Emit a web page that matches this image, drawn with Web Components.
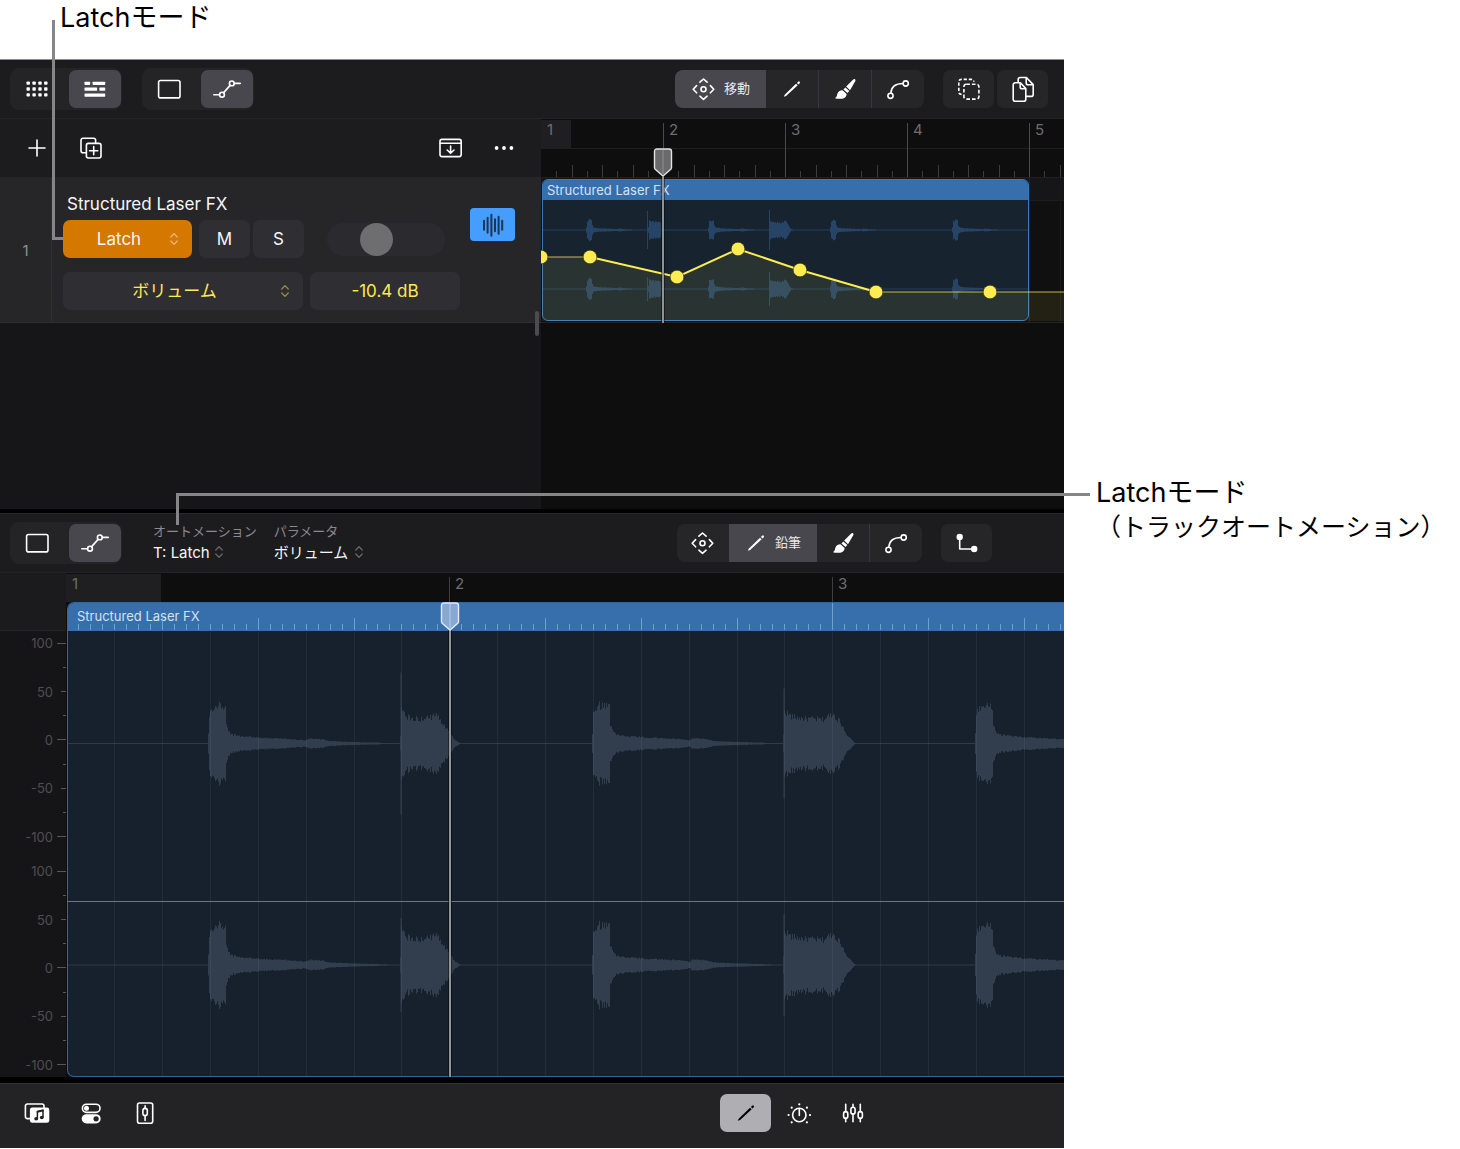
<!DOCTYPE html>
<html lang="ja">
<head>
<meta charset="utf-8">
<title>Latchモード</title>
<style>
  body {
    margin: 0;
    background: #fff;
    color: #000;
    font-family: Inter, "Noto Sans CJK JP", sans-serif;
  }
</style>
</head>
<body>
<latch-figure>
  <callout-note slot="top">Latchモード</callout-note>
  <daw-app slot="app"></daw-app>
  <callout-note slot="side">Latchモード<span slot="detail">（トラックオートメーション）</span></callout-note>
</latch-figure>

<script>
const define = (name, html, setup) => {
  const tpl = document.createElement('template');
  tpl.innerHTML = html;
  customElements.define(name, class extends HTMLElement {
    connectedCallback() {
      if (this.shadowRoot) return;
      const root = this.attachShadow({ mode: 'open' });
      root.append(tpl.content.cloneNode(true));
      if (setup) setup(this, root);
    }
  });
};

/* ---------- icons: [width, height, markup] ---------- */
const dots = [3.2, 9.1, 15, 20.8].flatMap(x => [6.1, 12, 17.9].map(y =>
  `<rect x="${x - 1.7}" y="${y - 1.7}" width="3.4" height="3.4" rx=".8" fill="currentColor" stroke="none"/>`)).join('');
const ICONS = {
  grid: [24, 24, dots],
  tracks: [24, 24, '<g fill="currentColor" stroke="none"><rect x="1.5" y="4.7" width="5.6" height="3.2" rx=".6"/><rect x="9.6" y="4.7" width="12.6" height="3.2" rx=".6"/><rect x="1.5" y="10.6" width="12.6" height="3.2" rx=".6"/><rect x="16.4" y="10.6" width="5.8" height="3.2" rx=".6"/><rect x="1.5" y="16.5" width="20.7" height="3.2" rx=".6"/></g>'],
  rect: [24, 24, '<rect x="1.6" y="3.5" width="21.4" height="17.4" rx="2"/>'],
  automation: [28, 24, '<path d="M.8 17.8H6.4M10.7 15.6L17.1 8.4M21.4 6.4H27.2"/><circle cx="9" cy="17.7" r="2.4"/><circle cx="18.8" cy="6.4" r="2.4"/>'],
  move: [25, 24, '<path d="M8.9 5.2L12.5 2L16.1 5.2M8.9 19.2L12.5 22.4L16.1 19.2M5.6 8.6L2.2 12.2L5.6 15.8M19.4 8.6L22.8 12.2L19.4 15.8"/><circle cx="12.5" cy="12.2" r="2.5"/>'],
  pencil: [22, 24, '<path fill="currentColor" stroke="none" d="M2.8 19.8L3.7 17.7L15 6.7L16.7 8.3L5.1 19ZM15.9 5.9L17.1 4.7Q18 4 18.7 4.7Q19.3 5.4 18.7 6.3L17.6 7.5Z"/>'],
  brush: [24, 24, '<g fill="currentColor" stroke="none"><path d="M13.2 9.6L20.2 2.5Q21.3 1.6 22.1 2.3Q22.8 3.1 22.2 4.2L17 13.2Z"/><path d="M12.4 10.5L16.3 14.1L14.5 16L10.4 12.4Z"/><path d="M9.5 13.2L13.6 16.9C13.7 20 11.2 21.6 8 21.7C5.5 22 3.5 21.9 1.8 21C3.7 20.6 3.9 18.6 4.3 17C4.8 14.9 6.9 13.2 9.5 13.2Z"/></g>'],
  curve: [24, 24, '<circle cx="4.5" cy="18.8" r="2.6"/><circle cx="19.7" cy="6.5" r="2.6"/><path d="M4.9 16C5.3 9.8 9.8 6.5 17 6.5"/>'],
  select: [24, 24, '<g stroke-linecap="butt"><path stroke-dasharray="3.2 1.9" d="M4.6 17.4Q1.8 17.2 1.8 14.8V5Q1.8 2.4 4.4 2.4H14Q16.6 2.4 16.8 4.8"/><rect x="6.9" y="7.2" width="15" height="14.9" rx="2.4" stroke-dasharray="3.6 2"/></g>'],
  docs: [24, 26, '<path d="M4.2 6.8H9.4L14.8 12.6V23.2a2 2 0 0 1-2 2H4.2a2 2 0 0 1-2-2V8.8a2 2 0 0 1 2-2zM9.2 7V11a1.8 1.8 0 0 0 1.8 1.8H14.6M7.2 6.4V3.5a2 2 0 0 1 2-2H15.4L22.2 8.6V18.4a2 2 0 0 1-2 2H15M15.2 1.8V7a1.8 1.8 0 0 0 1.8 1.8H22"/>'],
  plus: [24, 24, '<path d="M12 4V20M4 12H20"/>'],
  duplicate: [24, 24, '<path d="M6.8 16.8H4a2 2 0 0 1-2-2V4.2a2 2 0 0 1 2-2H14.6a2 2 0 0 1 2 2V6.8"/><rect x="7.4" y="7.4" width="14.6" height="14.6" rx="2"/><path d="M14.7 10.6V18.8M10.6 14.7H18.8"/>'],
  inbox: [24, 24, '<rect x="2" y="3.4" width="21.2" height="17.2" rx="2"/><path d="M2.2 7.3H23M12.6 10V17.2M9.2 14L12.6 17.3L16 14"/>'],
  more: [24, 24, '<g fill="currentColor" stroke="none"><circle cx="4.6" cy="12" r="1.9"/><circle cx="12" cy="12" r="1.9"/><circle cx="19.4" cy="12" r="1.9"/></g>'],
  wave: [24, 24, '<path stroke-width="2" d="M3 7.7V16.7M6.6 4.7V19.7M10.4 1.7V22.7M14 6.2V18.2M17.6 3.7V20.7M21.2 7.7V16.7"/>'],
  step: [24, 24, '<path d="M4.7 6V18H19"/><g fill="currentColor" stroke="none"><circle cx="4.7" cy="6" r="3.2"/><circle cx="19.2" cy="18" r="3.2"/></g>'],
  library: [28, 24, '<path d="M6.6 17.6H4.4a2 2 0 0 1-2-2V5a2 2 0 0 1 2-2H19a2 2 0 0 1 2 2V6.4"/><rect x="6.9" y="6.6" width="19.4" height="15.2" rx="2.4" fill="currentColor" stroke="none"/><g stroke="#232325"><path stroke-width="1.5" d="M14.4 17.4V10.6L20 9.2V16"/><path stroke-width="1.8" d="M14.4 10.8L20 9.4"/><ellipse cx="13.2" cy="17.8" rx="1.2" ry="1" fill="#232325"/><ellipse cx="18.8" cy="16.5" rx="1.2" ry="1" fill="#232325"/></g>'],
  toggles: [24, 24, '<rect x="3.4" y="3.2" width="17.6" height="8.2" rx="4.1"/><circle cx="7.5" cy="7.3" r="2.5" fill="currentColor" stroke="none"/><rect x="2.7" y="13.2" width="19" height="9.2" rx="4.6" fill="currentColor" stroke="none"/><circle cx="17.1" cy="17.8" r="2.6" fill="#232325" stroke="none"/>'],
  fader: [24, 24, '<rect x="4.5" y="2" width="15.2" height="20.2" rx="2"/><path d="M12.1 4.8V7.6M12.1 14.6V19.4"/><rect x="9.9" y="7.4" width="4.4" height="7.2" rx="2.2"/>'],
  dial: [24, 24, '<circle cx="12.3" cy="14" r="6.7"/><path d="M12.3 7.6V14.4"/><g fill="currentColor" stroke="none"><circle cx="12.3" cy="3.3" r="1.1"/><circle cx="4.7" cy="6.7" r="1.1"/><circle cx="19.9" cy="6.7" r="1.1"/><circle cx="1.6" cy="14" r="1.1"/><circle cx="23" cy="14" r="1.1"/><circle cx="4.7" cy="21.3" r="1.1"/><circle cx="19.9" cy="21.3" r="1.1"/></g>'],
  mixer: [24, 24, '<path d="M4.7 3.3V10.8M4.7 17.4V20.8M12 3.3V6.4M12 13V20.8M19.3 3.3V10.8M19.3 17.4V20.8"/><g stroke-width="1.6"><rect x="2.6" y="10.6" width="4.2" height="6.8" rx="2.1"/><rect x="9.9" y="6.2" width="4.2" height="6.8" rx="2.1"/><rect x="17.2" y="10.6" width="4.2" height="6.8" rx="2.1"/></g>'],
  updown: [8, 14, '<path stroke-width="1.3" d="M.8 5L4 1.6L7.2 5M.8 9L4 12.4L7.2 9"/>'],
};

define('ui-icon', `
<style>
  :host { display: block; flex: none; }
  svg { display: block; fill: none; stroke: currentColor; stroke-width: 1.6; stroke-linecap: round; stroke-linejoin: round; }
</style>`, (el, root) => {
  const [w, h, body] = ICONS[el.getAttribute('name')];
  root.innerHTML += `<svg width="${w}" height="${h}" viewBox="0 0 ${w} ${h}" aria-hidden="true">${body}</svg>`;
});

/* ---------- buttons and groups ---------- */
define('tool-button', `
<style>
  :host { display: block; flex: none; }
  button {
    display: flex; align-items: center; justify-content: center; gap: 8px;
    min-width: 52px; height: 38px; padding: 0; border: 0;
    border-radius: var(--tool-radius, 7px);
    background: var(--tool-bg, transparent); color: #fff; font: inherit; font-size: 13px; line-height: 16px;
  }
  :host([text]) button { padding: 0 16px; }
  span { padding-bottom: 2px; color: #e8e8ea; }
  :host([selected]) button { background: #48474d; }
  :host([solo]) button { background: #262629; min-width: 51px; }
  :host([light]) button { background: #aeaeb3; color: #000; min-width: 51px; }
</style>
<button type="button"></button>`, (el, root) => {
  const b = root.querySelector('button'), text = el.getAttribute('text');
  b.setAttribute('aria-label', text || el.getAttribute('label'));
  b.innerHTML = `<ui-icon name="${el.getAttribute('icon')}"></ui-icon>` + (text ? `<span>${text}</span>` : '');
});

define('toggle-group', `
<style>
  :host { display: flex; gap: 6px; padding: 2px 1px; border-radius: 9px; background: #242427; }
</style><slot></slot>`);

define('segment-group', `
<style>
  :host { display: flex; border-radius: 8px; background: #262629; overflow: hidden; --tool-radius: 0; }
  ::slotted([divided]) { border-left: 1px solid #38383c; }
</style><slot></slot>`);

define('tool-bar', `
<style>
  :host { display: flex; align-items: center; height: 59px; box-sizing: border-box; padding: 0 16px 0 10px; background: #1c1c1e; border-bottom: 1px solid #242426; }
  .left, .right { display: flex; align-items: center; }
  .left { gap: 20px; }
  .right { gap: 19px; margin-left: auto; }
</style>
<div class="left"><slot></slot></div>
<div class="right"><slot name="right"></slot></div>`);

define('pop-select', `
<style>
  :host { display: grid; align-items: center; min-width: 0; }
  select, ui-icon { grid-area: 1 / 1; }
  select {
    appearance: none; width: 100%; height: 38px; padding: 0 17px 0 0; margin: 0; border: 0; border-radius: 7px;
    background: var(--fill, #2f2f33); color: inherit; font: inherit; font-size: 17px; text-align-last: center;
  }
  ui-icon { justify-self: end; margin-right: 14px; opacity: .5; pointer-events: none; }
  :host([inline]) { display: inline-grid; justify-content: start; }
  :host([inline]) select { height: 24px; width: auto; padding: 0 13px 0 0; background: none; font-size: 15px; text-align-last: left; border-radius: 0; }
  :host([inline]) ui-icon { margin-right: 0; opacity: .35; }
</style>
<select></select><ui-icon name="updown"></ui-icon>`, (el, root) => {
  const s = root.querySelector('select');
  s.setAttribute('aria-label', el.getAttribute('label'));
  s.innerHTML = `<option>${el.getAttribute('value')}</option>`;
});

/* ---------- track header ---------- */
define('track-header', `
<style>
  :host { display: flex; box-sizing: border-box; height: 145px; background: #262628; color: #f5f5f7; border-bottom: 1px solid #2e2e30; }
  .num { flex: none; width: 51px; box-sizing: content-box; display: grid; place-items: center; border-right: 1px solid #2e2e31; color: #8e8e93; font-size: 15px; }
  .body { flex: none; width: 397px; padding: 16px 0 0 11px; }
  .name { margin: 0 0 5px 4px; font-size: 17px; font-weight: 400; line-height: 21px; }
  .row { display: flex; gap: 7px; align-items: center; }
  .row + .row { margin-top: 14px; color: #ffe94f; }
  .mode { width: 129px; --fill: #d47800; }
  .param { width: 241px; }
  .pair { display: flex; gap: 3px; }
  button, input { border: 0; margin: 0; padding: 0; font: inherit; font-size: 17px; color: inherit; }
  .pair button { width: 51px; height: 38px; border-radius: 7px; background: #2f2f33; }
  .value { width: 150px; height: 38px; border-radius: 7px; background: #2f2f33; text-align: center; box-sizing: border-box; }
  input[type=range] { appearance: none; width: 118px; height: 33px; margin-left: 16px; border-radius: 17px; background: #2b2b2f; }
  input[type=range]::-webkit-slider-thumb { appearance: none; width: 33px; height: 33px; border-radius: 50%; background: #6e6e71; }
  .region { width: 45px; height: 33px; margin: 30px 0 0 10px; border-radius: 4px; background: #459efe; color: #1b3557; display: grid; place-items: center; }
</style>
<div class="num">1</div>
<div class="body">
  <h2 class="name">Structured Laser FX</h2>
  <div class="row">
    <pop-select class="mode" label="オートメーションモード" value="Latch"></pop-select>
    <div class="pair"><button type="button">M</button><button type="button">S</button></div>
    <input type="range" aria-label="音量" min="0" max="100" value="39">
  </div>
  <div class="row">
    <pop-select class="param" label="パラメータ" value="ボリューム"></pop-select>
    <input class="value" type="text" aria-label="値" value="-10.4 dB">
  </div>
</div>
<button class="region" type="button" aria-label="波形"><ui-icon name="wave"></ui-icon></button>`);

/* ---------- waveform geometry ---------- */
const HIT = [[0,10],[1,29],[3,32],[5,35],[8,37],[12,38],[17,36],[18,19],[20,13],[23,9],[32,7.5],[50,6],[70,5],[90,4],[97,3],[100,5],[114,4.5],[120,2.5],[140,1.6],[170,.9],[178,0]];
const BURST_CUT = [[0,8],[1,33],[5,27],[20,24],[36,28],[41,22],[46,15],[50,10],[54,4],[60,0]];
const BURST = [[0,8],[1,33],[8,27],[20,25],[40,24],[49,30],[55,24],[60,16],[64,8],[72,0]];
const level = (pts, x) => {
  for (let i = 1; i < pts.length; i++) {
    const [x0, a] = pts[i - 1], [x1, b] = pts[i];
    if (x <= x1) return a + (b - a) * (x - x0) / (x1 - x0);
  }
  return 0;
};
const wave = (x0, cy, pts, k, gain, seed) => {
  let up = '', down = '', r = seed;
  const n = Math.round(pts[pts.length - 1][0] * k);
  for (let i = 0; i <= n; i++) {
    r = (r * 1103515245 + 12345) % 2147483648;
    const h = Math.max(.4, level(pts, i / k) * gain * (.87 + .25 * r / 2147483648));
    up += `L${x0 + i} ${(cy - h).toFixed(1)}h1`;
    down = `L${x0 + i + 1} ${(cy + h).toFixed(1)}h-1` + down;
  }
  return `M${x0} ${cy}${up}${down}Z`;
};
const spike = (x, cy, h) => `M${x} ${cy - h}h1v${2 * h}h-1z`;
const vline = (x, y0, y1, c, w = 1) => `<rect x="${x}" y="${y0}" width="${w}" height="${y1 - y0}" fill="${c}"/>`;
const HANDLE = 'M3.5 1H15.5Q18 1 18 3.5V19.5Q18 20.5 17.3 21.2L9.5 28L1.7 21.2Q1 20.5 1 19.5V3.5Q1 1 3.5 1Z';

/* ---------- arrange timeline ---------- */
define('arrange-timeline', `
<style>
  :host { display: block; position: relative; overflow: hidden; background: #0e0e0f; min-width: 0; }
  .ruler { position: relative; display: flex; height: 59px; box-sizing: border-box; border-bottom: 1px solid #1f1f21; overflow: hidden; }
  .ruler svg { position: absolute; left: 0; top: 0; }
  .bar { position: relative; flex: none; width: 122px; padding: 2px 0 0 6px; box-sizing: border-box; font-size: 15px; line-height: 18px; color: #6d6d71; }
  .lane { position: relative; height: 145px; box-sizing: border-box; padding: 1px 0 0 1px; border-bottom: 1px solid #232325; background: linear-gradient(#161618 22px, #1d1d1f 22px 23px, #101010 23px); }
  .region { width: 487px; height: 142px; box-sizing: border-box; border: 1px solid #3a78b8; border-radius: 6px; overflow: hidden; background: #17232f; }
  .region h3 { margin: 0; padding-left: 4px; height: 20px; line-height: 20px; font-size: 13px; font-weight: 400; color: #d3e2f2; background: #376fac; }
  .lane svg, .head { position: absolute; left: 0; top: 0; }
</style>
<div class="ruler"></div>
<div class="lane"><div class="region"><h3>Structured Laser FX</h3></div></div>
<svg class="head" width="200" height="204"></svg>`, (el, root) => {
  const bar = 122, W = 2000;
  let t = `<rect width="30" height="29" y="1" fill="#1f1f22"/><rect y="29" width="${W}" height="1" fill="#1f1f21"/>`;
  for (let i = 1; i * bar / 8 < W; i++) {
    const x = Math.round(i * bar / 8);
    t += i % 8 === 0 ? vline(x, 4, 58, '#4a4a4d') : vline(x, i % 2 ? 52 : 46, 58, '#3b3b3e');
  }
  root.querySelector('.ruler').innerHTML = `<svg width="${W}" height="59">${t}</svg>` +
    [1, 2, 3, 4, 5].map(n => `<div class="bar">${n}</div>`).join('');
  let d = '';
  for (const [cy, s1, s2] of [[52, 19, 20], [111, 12, 17]]) {
    for (let i = 0; i < 4; i++) d += wave((i === 3 ? 45 : 45) + i * bar, cy, HIT.slice(0, -2), .319, .27, 7 + i);
    d += wave(107, cy, BURST.slice(0, 5), .319, .32, 21) + spike(106, cy, s1);
    d += wave(228, cy, BURST, .319, .31, 9) + spike(228, cy, s2);
  }
  const pts = [[1,79],[49,79],[136,99],[197,71],[259,92],[335,114],[449,114]];
  const poly = pts.map(p => p.join(' ')).join('L');
  root.querySelector('.lane').insertAdjacentHTML('beforeend', `
  <svg width="${W}" height="145">
    ${vline(488, 0, 144, '#222224')}${vline(519, 0, 144, '#19191b')}
    <path fill="#23405e" d="M2 51.5H487v1H2zM2 110.5H487v1H2z"/><path fill="#264465" d="${d}"/>
    <path fill="#ffec52" fill-opacity=".08" d="M1 79L${poly}L${W} 114V143H1z"/>
    <path fill="none" stroke="#ffec52" stroke-opacity=".5" stroke-width="1.4" d="M1 79H49M335 114H${W}"/>
    <path fill="none" stroke="#ffec52" stroke-width="2" d="M${pts.slice(1, 6).map(p => p.join(' ')).join('L')}"/>
    <g fill="#ffec52" stroke="#1b1b10" stroke-opacity=".5">${pts.map((p, i) => `<circle cx="${i ? p[0] : 0}" cy="${p[1]}" r="6.8"/>`).join('')}</g>
  </svg>`);
  root.querySelector('.head').innerHTML = `<g opacity=".4">${vline(120, 58, 204, '#000', 4)}</g>${vline(121, 58, 204, '#929294', 2)}
    <g transform="translate(112.5 29)"><path d="${HANDLE}" fill="#6a6a6c" stroke="#e2e2e4" stroke-width="1.4"/><path d="M9.5 2V27" stroke="#858587" stroke-width="1.5"/></g>`;
});

/* ---------- audio editor ---------- */
define('level-scale', `
<style>
  :host { display: grid; grid-auto-rows: 1fr; font-size: 13px; line-height: 16px; color: #4e4e52; }
  div { display: flex; align-items: center; justify-content: flex-end; gap: 8px; min-height: 0; }
  span { line-height: 0; }
  i { width: 3px; height: 1px; background: #55555a; }
  .mid i { width: 5px; }
  .major i { width: 9px; }
  .major { gap: 4px; }
</style>`, (el, root) => {
  root.innerHTML += ['100', '', '50', '', '0', '', '-50', '', '-100'].map((v, i) =>
    `<div class="${i % 4 === 0 ? 'major' : i % 2 ? '' : 'mid'}"><span>${v}</span><i></i></div>`).join('');
});

define('audio-editor', `
<style>
  :host { display: grid; grid-template-columns: 66px minmax(0, 1fr); background: #151517; }
  .side { display: flex; flex-direction: column; }
  .corner { height: 58px; box-sizing: border-box; background: #1b1b1d; border-bottom: 1px solid #252527; }
  .scales { flex: 1; display: grid; grid-template-rows: 218px 218px; gap: 10px; background: #151517; }
  .main { position: relative; overflow: hidden; background: #0e0e0f; }
  .ruler { position: relative; display: flex; height: 29px; overflow: hidden; }
  .ruler svg, .art { position: absolute; left: 0; top: 0; }
  .bar { position: relative; flex: none; width: 383px; box-sizing: border-box; padding: 2px 0 0 6px; font-size: 15px; line-height: 18px; color: #6d6d71; }
  .region { margin-left: 1px; height: 475px; box-sizing: border-box; border: solid #2f679f; border-width: 1px 0 1px 1px; border-radius: 7px 0 0 7px; overflow: hidden; background: #16212d; }
  h3 { margin: 0; padding-left: 9px; height: 28px; line-height: 26px; font-size: 13px; font-weight: 400; color: #d3e2f2; background: #376fac; }
</style>
<div class="side"><div class="corner"></div><div class="scales"><level-scale></level-scale><level-scale></level-scale></div></div>
<div class="main"><div class="ruler"></div><div class="region"><h3>Structured Laser FX</h3></div></div>`, (el, root) => {
  const bar = 383, W = 2400;
  let r = '<rect width="95" height="28" y="1" fill="#1f1f22"/>', ticks = '', grid = '', d = '';
  for (let i = 1; i * bar / 32 < W; i++) {
    const x = Math.round(i * bar / 32 + .3);
    if (i % 32 === 0) r += vline(x, 4, 29, '#3e3e41');
    ticks += vline(x, i % 32 === 0 ? 30 : i % 8 === 0 ? 45 : 51, 57, '#8fb2d8');
    if (i % 4 === 0) grid += vline(x, 58, 503, '#9ab');
  }
  root.querySelector('.ruler').innerHTML = `<svg width="${W}" height="29">${r}</svg>` +
    [1, 2, 3].map(n => `<div class="bar">${n}</div>`).join('');
  for (const [cy, g, s1, s2] of [[170.5, 1, 71, 55], [392, 1.05, 47, 51]]) {
    for (let i = 0; i < 5; i++) d += wave(142 + i * bar + (i ? 1 : 0), cy, HIT, 1, g * (i ? 1.04 : 1), 3 + i);
    d += wave(334, cy, BURST_CUT, 1, g, 12) + spike(334.5, cy, s1);
    d += wave(717, cy, BURST, 1, g, 17) + spike(717.5, cy, s2);
  }
  root.querySelector('.main').insertAdjacentHTML('beforeend', `
  <svg class="art" width="${W}" height="504">
    <g opacity=".7">${ticks}</g>
    <path fill="#2f3b49" d="M2 170h${W}v1H2zM2 391.5h${W}v1H2z"/><path fill="#323e4e" d="${d}"/>
    <g opacity=".09">${grid}</g>
    <rect x="1" y="328" width="${W}" height="1" fill="#70757b"/>
    <g opacity=".4">${vline(382, 57, 504, '#000', 4)}</g>${vline(383, 57, 504, '#929498', 2)}
    <g transform="translate(374.5 29)"><path d="${HANDLE}" fill="#86a9d3" stroke="#e8e8ee" stroke-width="1.4"/><path d="M9.5 2V27" stroke="#a9c1de" stroke-width="1.5"/></g>
  </svg>`);
});

define('param-field', `
<style>
  :host { display: block; }
  label { display: block; font-size: 13px; line-height: 18px; color: #8a8a8f; }
  pop-select { color: #f5f5f7; }
  .box { display: flex; }
</style>
<label></label><div class="box"></div>`, (el, root) => {
  const l = root.querySelector('label'), box = root.querySelector('.box');
  l.textContent = el.getAttribute('label');
  box.innerHTML = `<pop-select inline label="${el.getAttribute('label')}" value="${el.getAttribute('value')}"></pop-select>`;
  l.addEventListener('click', () => box.firstChild.shadowRoot.querySelector('select').focus());
});

/* ---------- app ---------- */
define('daw-app', `
<style>
  :host { display: block; background: #000; border-top: 1px solid #8c908c; }
  .arrange { display: grid; grid-template-columns: 541px minmax(0, 1fr); height: 390px; }
  .tracks { position: relative; background: #161618; }
  .trackbar { display: flex; align-items: center; gap: 2px; height: 59px; box-sizing: border-box; padding: 0 11px; background: #1c1c1e; border-bottom: 1px solid #242426; }
  .push { margin-left: auto; }
  .grip { position: absolute; right: 2px; top: 192px; width: 4px; height: 25px; border-radius: 2px; background: #4c4c4f; }
  .editbar { margin-top: 4px; height: 60px; padding-right: 72px; border-top: 1px solid #2a2a2c; }
  .fields { display: flex; gap: 17px; margin-left: 11px; }
  .pair { display: flex; gap: 3px; }
  footer { display: flex; align-items: center; gap: 2px; margin-top: 6px; height: 65px; box-sizing: border-box; padding: 0 185px 6px 11px; background: #232325; border-top: 1px solid #303033; }
</style>
<tool-bar>
  <toggle-group>
    <tool-button icon="grid" label="ライブループ"></tool-button>
    <tool-button icon="tracks" label="トラック" selected></tool-button>
  </toggle-group>
  <toggle-group>
    <tool-button icon="rect" label="リージョン"></tool-button>
    <tool-button icon="automation" label="オートメーション" selected></tool-button>
  </toggle-group>
  <segment-group slot="right">
    <tool-button icon="move" text="移動" selected></tool-button>
    <tool-button icon="pencil" label="鉛筆"></tool-button>
    <tool-button icon="brush" label="ブラシ" divided></tool-button>
    <tool-button icon="curve" label="曲線" divided></tool-button>
  </segment-group>
  <div class="pair" slot="right">
    <tool-button icon="select" label="複数選択" solo></tool-button>
    <tool-button icon="docs" label="コピー" solo></tool-button>
  </div>
</tool-bar>
<div class="arrange">
  <div class="tracks">
    <div class="trackbar">
      <tool-button icon="plus" label="追加"></tool-button>
      <tool-button icon="duplicate" label="複製"></tool-button>
      <tool-button class="push" icon="inbox" label="読み込む"></tool-button>
      <tool-button icon="more" label="その他"></tool-button>
    </div>
    <track-header></track-header>
    <div class="grip"></div>
  </div>
  <arrange-timeline></arrange-timeline>
</div>
<tool-bar class="editbar">
  <toggle-group>
    <tool-button icon="rect" label="リージョン"></tool-button>
    <tool-button icon="automation" label="オートメーション" selected></tool-button>
  </toggle-group>
  <div class="fields">
    <param-field label="オートメーション" value="T: Latch"></param-field>
    <param-field label="パラメータ" value="ボリューム"></param-field>
  </div>
  <segment-group slot="right">
    <tool-button icon="move" label="移動"></tool-button>
    <tool-button icon="pencil" text="鉛筆" selected></tool-button>
    <tool-button icon="brush" label="ブラシ"></tool-button>
    <tool-button icon="curve" label="曲線" divided></tool-button>
  </segment-group>
  <tool-button slot="right" icon="step" label="ステップ" solo></tool-button>
</tool-bar>
<audio-editor></audio-editor>
<footer>
  <tool-button icon="library" label="ブラウザ"></tool-button>
  <tool-button icon="toggles" label="プラグイン"></tool-button>
  <tool-button icon="fader" label="フェーダー"></tool-button>
  <tool-button class="push" icon="pencil" label="編集" light></tool-button>
  <tool-button icon="dial" label="コントロール"></tool-button>
  <tool-button icon="mixer" label="ミキサー"></tool-button>
</footer>`);

define('callout-note', `
<style>
  :host { display: block; font-size: 27px; line-height: 34px; color: #000; white-space: nowrap; }
  .detail { font-size: 25px; }
</style><div><slot></slot></div><div class="detail"><slot name="detail"></slot></div>`);

define('latch-figure', `
<style>
  :host { position: relative; display: grid; grid-template-columns: minmax(0, 1fr) 396px; align-items: start; }
  .top { grid-column: 1 / -1; height: 59px; box-sizing: border-box; padding: 1px 0 0 60px; }
  .side { padding: 417px 0 0 32px; }
  .lead { position: absolute; border: 0 solid #868686; pointer-events: none; }
  .one { left: 52px; top: 20px; width: 8px; height: 217px; border-width: 0 0 3px 3px; }
  .two { left: 176px; right: 370px; top: 493px; height: 29px; border-width: 3px 0 0 3px; }
</style>
<div class="top"><slot name="top"></slot></div>
<slot name="app"></slot>
<div class="side"><slot name="side"></slot></div>
<div class="lead one"></div>
<div class="lead two"></div>`);
</script>
</body>
</html>
